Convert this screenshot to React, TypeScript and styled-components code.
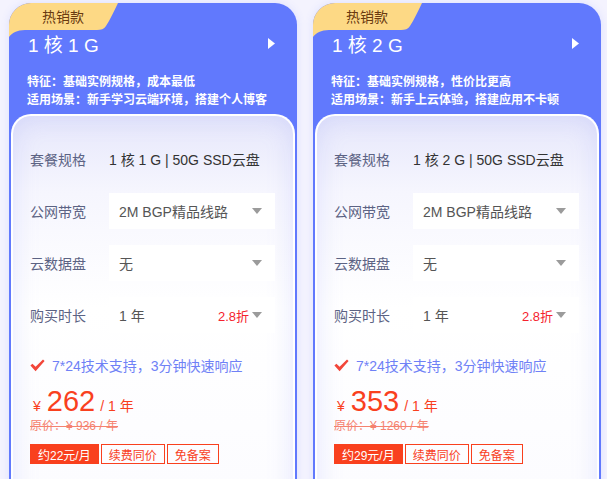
import styled, { createGlobalStyle } from 'styled-components';

const GlobalStyle = createGlobalStyle`
	html, body {
		margin: 0;
		padding: 0;
		background: #f4f3fe;
		overflow: hidden;
	}
	body {
		font-family: "Liberation Sans", "Noto Sans CJK SC", sans-serif;
	}
`;

type Plan = {
	title: string;
	feature: string;
	scene: string;
	spec: string;
	price: string;
	original: string;
	monthly: string;
};

const plans: Plan[] = [
	{
		title: '1 核 1 G',
		feature: '特征：基础实例规格，成本最低',
		scene: '适用场景：新手学习云端环境，搭建个人博客',
		spec: '1 核 1 G | 50G SSD云盘',
		price: '262',
		original: '原价：¥ 936 / 年',
		monthly: '约22元/月'
	},
	{
		title: '1 核 2 G',
		feature: '特征：基础实例规格，性价比更高',
		scene: '适用场景：新手上云体验，搭建应用不卡顿',
		spec: '1 核 2 G | 50G SSD云盘',
		price: '353',
		original: '原价：¥ 1260 / 年',
		monthly: '约29元/月'
	}
];

function Caret() {
	return (
		<svg width="10" height="6" viewBox="0 0 10 6">
			<path d="M0 0 H10 L5 6 Z" fill="#9b9b9b" />
		</svg>
	);
}

function Check() {
	return (
		<svg width="15" height="13" viewBox="0 0 15 13">
			<path d="M0.4 6.6 L2.4 4.7 L5.6 7.8 L13 0.4 L14.6 2 L5.6 12.2 Z" fill="#f2463a" />
		</svg>
	);
}

function PlanCard({ plan }: { plan: Plan }) {
	return (
		<Card>
			<Badge>
				<svg width="112" height="36" viewBox="0 0 112 36">
					<path d="M0 0 H109 C105 8 101 17 97 23 C95 26 92 27 88 27 H16 C8 27 3 30 0 34 Z" fill="#fdd985" />
				</svg>
				<BadgeText>热销款</BadgeText>
			</Badge>
			<Header>
				<Title>{plan.title}</Title>
				<Arrow viewBox="0 0 7 11">
					<path d="M0 0 L7 5.5 L0 11 Z" fill="#ffffff" />
				</Arrow>
			</Header>
			<Features>
				<div>{plan.feature}</div>
				<div>{plan.scene}</div>
			</Features>
			<Panel>
				<Row>
					<Label>套餐规格</Label>
					<SpecValue>{plan.spec}</SpecValue>
				</Row>
				<Row>
					<Label>公网带宽</Label>
					<Select>
						<SelectText>2M BGP精品线路</SelectText>
						<Caret />
					</Select>
				</Row>
				<Row>
					<Label>云数据盘</Label>
					<Select>
						<SelectText>无</SelectText>
						<Caret />
					</Select>
				</Row>
				<Row>
					<Label>购买时长</Label>
					<Select>
						<SelectText>1 年</SelectText>
						<Discount>2.8折</Discount>
						<Caret />
					</Select>
				</Row>
				<Support>
					<Check />
					<span>7*24技术支持，3分钟快速响应</span>
				</Support>
				<PriceRow>
					<Yen>¥</Yen>
					<Amount>{plan.price}</Amount>
					<Unit>/ 1 年</Unit>
				</PriceRow>
				<Original>{plan.original}</Original>
				<Tags>
					<Tag $filled>{plan.monthly}</Tag>
					<Tag>续费同价</Tag>
					<Tag>免备案</Tag>
				</Tags>
			</Panel>
		</Card>
	);
}

export default function App() {
	return (
		<>
			<GlobalStyle />
			<Page>
				{plans.map(plan => <PlanCard key={plan.price} plan={plan} />)}
			</Page>
		</>
	);
}

const Page = styled.div`
	display: flex;
	gap: 16px;
	padding: 3px 0 0 9px;
	height: 479px;
	box-sizing: border-box;
`;

const Card = styled.div`
	position: relative;
	display: flex;
	flex-direction: column;
	width: 288px;
	height: 540px;
	flex-shrink: 0;
	background: #6179fd;
	border-radius: 22px 22px 0 0;
	overflow: hidden;
	box-shadow: 0 0 8px rgba(97, 121, 253, 0.15);
`;

const Badge = styled.div`
	position: absolute;
	left: 0;
	top: 0;
	width: 112px;
	height: 36px;
	svg {
		position: absolute;
		left: 0;
		top: 0;
	}
`;

const BadgeText = styled.span`
	position: absolute;
	left: 33px;
	top: 5px;
	font-size: 14px;
	line-height: 18px;
	color: #6a3a10;
`;

const Header = styled.div`
	display: flex;
	align-items: center;
	justify-content: space-between;
	margin-top: 30px;
	padding: 0 22px 0 19px;
	height: 26px;
`;

const Title = styled.div`
	color: #ffffff;
	font-size: 19px;
	line-height: 26px;
`;

const Arrow = styled.svg`
	width: 7px;
	height: 11px;
	margin-top: -6px;
`;

const Features = styled.div`
	margin-top: 14px;
	padding: 0 18px;
	color: #ffffff;
	font-size: 12px;
	line-height: 18px;
	font-weight: bold;
`;

const Panel = styled.div`
	flex: 1;
	display: flex;
	flex-direction: column;
	margin: 5px 2px 0 2px;
	padding: 25px 18px 0 17px;
	border: 2px solid #ffffff;
	border-bottom: none;
	border-radius: 20px 20px 0 0;
	background: linear-gradient(180deg, #e6e7fb 0%, #f6f6fe 18%, #ffffff 45%, #fbfbff 100%);
	box-shadow: inset 0 0 26px rgba(140, 150, 245, 0.22);
`;

const Row = styled.div`
	display: flex;
	align-items: center;
	height: 36px;
	margin-bottom: 16px;
`;

const Label = styled.div`
	width: 79px;
	flex-shrink: 0;
	font-size: 14px;
	color: #5c6384;
`;

const SpecValue = styled.div`
	font-size: 14px;
	color: #333333;
`;

const Select = styled.div`
	flex: 1;
	display: flex;
	align-items: center;
	height: 36px;
	padding: 0 13px 0 10px;
	background: #ffffff;
	font-size: 14px;
	color: #555555;
`;

const SelectText = styled.span`
	flex: 1;
`;

const Discount = styled.span`
	font-size: 13px;
	color: #f5222d;
	margin-right: 3px;
`;

const Support = styled.div`
	display: flex;
	align-items: center;
	gap: 7px;
	margin-top: 6px;
	height: 20px;
	font-size: 14px;
	color: #6f81f6;
`;

const PriceRow = styled.div`
	display: flex;
	align-items: baseline;
	margin-top: 10px;
	height: 32px;
	color: #f9401e;
	padding-left: 3px;
`;

const Yen = styled.span`
	font-size: 14px;
	margin-right: 6px;
`;

const Amount = styled.span`
	font-size: 29px;
	line-height: 32px;
	margin-right: 5px;
`;

const Unit = styled.span`
	font-size: 14px;
`;

const Original = styled.div`
	margin-top: 2px;
	font-size: 12px;
	line-height: 14px;
	color: #f5826f;
	text-decoration: line-through;
`;

const Tags = styled.div`
	display: flex;
	gap: 2px;
	margin-top: 11px;
`;

const Tag = styled.div<{ $filled?: boolean }>`
	display: flex;
	align-items: center;
	justify-content: center;
	height: 20px;
	padding: 0 7px;
	box-sizing: border-box;
	font-size: 12px;
	border: 1px solid #f9401e;
	color: ${({ $filled }) => ($filled ? '#ffffff' : '#f9401e')};
	background: ${({ $filled }) => ($filled ? '#f9401e' : 'transparent')};
`;
